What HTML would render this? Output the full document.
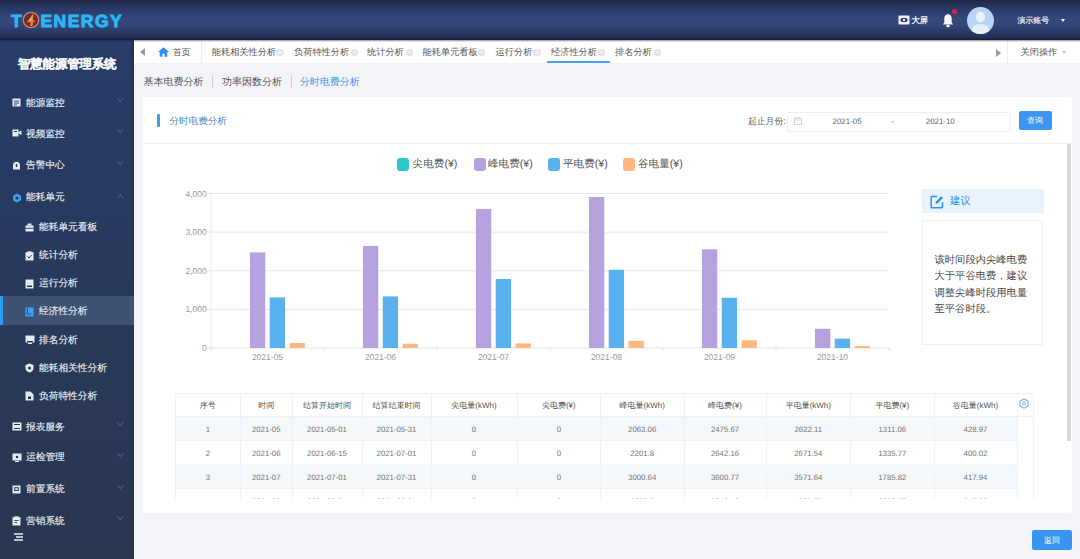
<!DOCTYPE html>
<html><head><meta charset="utf-8">
<style>
*{margin:0;padding:0;box-sizing:border-box}
html,body{width:1080px;height:559px;overflow:hidden}
body{position:relative;background:#f3f4f8;font-family:"Liberation Sans",sans-serif;color:#333;text-rendering:geometricPrecision}
.a{position:absolute}
.t{position:absolute;white-space:nowrap;line-height:1}
#hdr{left:0;top:0;width:1080px;height:40px;background:linear-gradient(180deg,#1d2644 0%,#283866 20%,#36497b 47%,#33467a 62%,#27365e 85%,#222f55 93%,#171d33 100%)}
#side{left:0;top:40px;width:134px;height:519px;background:linear-gradient(180deg,#283d68 0%,#273a60 30%,#29374f 100%);border-right:3px solid #29344e}
.mt{font-size:9.7px;color:#e8ecf3;-webkit-text-stroke:0.15px #e8ecf3}
.ch{position:absolute;width:4.5px;height:4.5px;border-right:1.2px solid #4e5e7c;border-bottom:1.2px solid #4e5e7c;transform:rotate(45deg)}
.tb{font-size:9.2px;color:#555}
.cx{position:absolute;width:7.5px;height:7.5px;border-radius:50%;border:1.3px solid #d8d8d8;background:#eeeeee}
.th{font-size:8px;color:#505050}
.td{font-size:7.8px;color:#767676}
</style></head><body>
<!-- HEADER -->
<div id="hdr" class="a"></div>
<div class="t" style="left:11px;top:13px;font-size:17.5px;font-weight:bold;color:#2cb8f4;-webkit-text-stroke:0.9px #2cb8f4">T</div>
<svg class="a" style="left:22px;top:11px" width="18" height="18" viewBox="0 0 18 18"><circle cx="9" cy="9" r="7.7" fill="#6a3030" stroke="#c98478" stroke-width="1.3"/><path d="M10.8 3 L4.8 11.2 L8.6 11.2 L8.2 15 L10.6 15 L10.9 11.2 L12.6 11.2 L12.6 9.3 L11 9.3 L11.4 3 Z" fill="#e8843a"/><path d="M10.4 5 L6.8 9.6 L9.3 9.6 Z" fill="#f7b060"/></svg>
<div class="t" style="left:40.5px;top:13px;font-size:17.5px;font-weight:bold;color:#2cb8f4;letter-spacing:1.45px;-webkit-text-stroke:0.9px #2cb8f4">ENERGY</div>
<svg class="a" style="left:898px;top:15px" width="12" height="10" viewBox="0 0 12 10"><rect x="0.5" y="0.5" width="11" height="9" rx="1" fill="#eef2f8"/><ellipse cx="6" cy="5" rx="3.6" ry="2.2" fill="#2b3b6a"/><circle cx="6" cy="5" r="1.2" fill="#eef2f8"/></svg>
<div class="t" style="left:911.5px;top:15.5px;font-size:8.3px;color:#f2f4f8;font-weight:bold">大屏</div>
<svg class="a" style="left:942px;top:13px" width="12" height="15" viewBox="0 0 12 15"><path d="M6 1.2 C3.2 1.2 2.3 3.8 2.3 6 L2.3 9.5 L0.8 11.5 L11.2 11.5 L9.7 9.5 L9.7 6 C9.7 3.8 8.8 1.2 6 1.2 Z" fill="#f4f6fa"/><ellipse cx="6" cy="13" rx="1.8" ry="1.3" fill="#f4f6fa"/></svg>
<div class="a" style="left:952px;top:9px;width:5px;height:5px;border-radius:50%;background:#e0243a"></div>
<div class="a" style="left:967px;top:6.5px;width:27px;height:27.5px;border-radius:50%;background:#b7d5f4;overflow:hidden"><svg width="27" height="27.5" viewBox="0 0 27 27.5"><ellipse cx="13.5" cy="10" rx="4.6" ry="5.4" fill="#eaf3fd"/><path d="M3.5 27.5 C4 20 8 17 13.5 17 C19 17 23 20 23.5 27.5 Z" fill="#e6f0fb"/></svg></div>
<div class="t" style="left:1017.5px;top:16.8px;font-size:7.9px;color:#f2f4f8;-webkit-text-stroke:0.15px #f2f4f8">演示账号</div>
<div class="a" style="left:1061px;top:19px;width:0;height:0;border-left:2.6px solid transparent;border-right:2.6px solid transparent;border-top:3.2px solid #f2f4f8"></div>

<!-- SIDEBAR -->
<div id="side" class="a"></div>
<div class="t" style="left:18px;top:57.5px;font-size:12.3px;font-weight:bold;color:#f4f6fa;-webkit-text-stroke:0.3px #f4f6fa">智慧能源管理系统</div>
<svg class="a" style="left:12px;top:98.2px" width="9" height="9" viewBox="0 0 9 9"><rect x="0.5" y="0.5" width="8" height="8" fill="#e6eaf2"/><path d="M2 3h5M2 5h5M2 7h3" stroke="#233860" stroke-width="0.9"/></svg>
<div class="t mt" style="left:26px;top:98.7px">能源监控</div>
<div class="ch" style="left:117.5px;top:96.2px"></div>
<svg class="a" style="left:12px;top:129.0px" width="10" height="9" viewBox="0 0 10 9"><rect x="0.5" y="0.5" width="6" height="7" fill="#e6eaf2"/><path d="M6.5 3 L9.5 1.5 L9.5 6 L6.5 4.5Z" fill="#e6eaf2"/><rect x="2" y="2" width="3" height="1" fill="#233860"/></svg>
<div class="t mt" style="left:26px;top:129.5px">视频监控</div>
<div class="ch" style="left:117.5px;top:127.0px"></div>
<svg class="a" style="left:12px;top:160.5px" width="9" height="9" viewBox="0 0 9 9"><path d="M1 8.5 L1 4.5 C1 2 2.5 0.8 4.5 0.8 C6.5 0.8 8 2 8 4.5 L8 8.5Z" fill="#e6eaf2"/><rect x="3.8" y="3" width="1.4" height="3" fill="#233860"/></svg>
<div class="t mt" style="left:26px;top:161.0px">告警中心</div>
<div class="ch" style="left:117.5px;top:158.5px"></div>
<svg class="a" style="left:12px;top:192.9px" width="10" height="10" viewBox="0 0 10 10"><path d="M5 0.5 L9 2.8 L9 7.2 L5 9.5 L1 7.2 L1 2.8Z" fill="#3ea0f0"/><circle cx="5" cy="5" r="1.6" fill="#233860"/></svg>
<div class="t mt" style="left:26px;top:193.4px">能耗单元</div>
<div class="ch" style="left:117.5px;top:195.5px;transform:rotate(-135deg)"></div>
<div class="a" style="left:0;top:296px;width:134px;height:29px;background:#3e5274"></div>
<div class="a" style="left:0;top:296px;width:3px;height:29px;background:#2d9cf0"></div>
<svg class="a" style="left:25px;top:222.5px" width="9" height="9" viewBox="0 0 9 9"><rect x="2.5" y="0.5" width="4" height="2" fill="#e6eaf2"/><rect x="0.5" y="2.5" width="8" height="6" fill="#e6eaf2"/><rect x="0.5" y="4.8" width="8" height="0.9" fill="#233860"/></svg>
<div class="t mt" style="left:39px;top:223.0px">能耗单元看板</div>
<svg class="a" style="left:25px;top:250.5px" width="9" height="10" viewBox="0 0 9 10"><rect x="0.5" y="1.2" width="8" height="8.3" fill="#e6eaf2"/><rect x="2.5" y="0.3" width="4" height="1.8" fill="#e6eaf2"/><path d="M2.5 5.5 L4 7 L6.5 4" stroke="#233860" stroke-width="1" fill="none"/></svg>
<div class="t mt" style="left:39px;top:251.0px">统计分析</div>
<svg class="a" style="left:25px;top:278.5px" width="9" height="10" viewBox="0 0 9 10"><rect x="0.5" y="0.5" width="8" height="9" fill="#e6eaf2"/><rect x="2" y="6.5" width="5" height="1.5" fill="#233860"/></svg>
<div class="t mt" style="left:39px;top:279.0px">运行分析</div>
<svg class="a" style="left:25px;top:306.5px" width="9" height="10" viewBox="0 0 9 10"><rect x="0.5" y="0.5" width="8" height="9" fill="#3ea0f0"/><path d="M2.5 1.5 L2.5 7 L6.5 7" stroke="#3a5076" stroke-width="1.1" fill="none"/></svg>
<div class="t mt" style="left:39px;top:307.0px">经济性分析</div>
<svg class="a" style="left:25px;top:335.3px" width="10" height="9" viewBox="0 0 10 9"><rect x="0.5" y="0.5" width="9" height="7" fill="#e6eaf2"/><rect x="2" y="6" width="6" height="1" fill="#233860"/><rect x="3" y="8" width="4" height="1" fill="#e6eaf2"/></svg>
<div class="t mt" style="left:39px;top:335.8px">排名分析</div>
<svg class="a" style="left:25px;top:363.2px" width="9" height="10" viewBox="0 0 9 10"><path d="M4.5 0.5 L8.5 2 L8.5 5 C8.5 7.5 6.5 9 4.5 9.6 C2.5 9 0.5 7.5 0.5 5 L0.5 2Z" fill="#e6eaf2"/><circle cx="4.5" cy="5" r="1.5" fill="#233860"/></svg>
<div class="t mt" style="left:39px;top:363.7px">能耗相关性分析</div>
<svg class="a" style="left:25px;top:391.1px" width="9" height="10" viewBox="0 0 9 10"><path d="M0.5 0.5 L5.5 0.5 L8.5 3.5 L8.5 9.5 L0.5 9.5Z" fill="#e6eaf2"/><rect x="3" y="5.5" width="3" height="2.5" fill="#233860"/></svg>
<div class="t mt" style="left:39px;top:391.6px">负荷特性分析</div>
<svg class="a" style="left:12px;top:422.0px" width="10" height="9" viewBox="0 0 10 9"><rect x="0.5" y="0.5" width="9" height="8" fill="#e6eaf2"/><rect x="2" y="2" width="6" height="1" fill="#233860"/><rect x="2" y="6" width="6" height="1" fill="#233860"/></svg>
<div class="t mt" style="left:26px;top:422.5px">报表服务</div>
<div class="ch" style="left:117.5px;top:420.0px"></div>
<svg class="a" style="left:12px;top:452.9px" width="10" height="9" viewBox="0 0 10 9"><rect x="0.5" y="0.5" width="9" height="7" fill="#e6eaf2"/><circle cx="5" cy="4" r="1.3" fill="#233860"/><rect x="3" y="8" width="4" height="1" fill="#e6eaf2"/></svg>
<div class="t mt" style="left:26px;top:453.4px">运检管理</div>
<div class="ch" style="left:117.5px;top:450.9px"></div>
<svg class="a" style="left:12px;top:484.9px" width="9" height="9" viewBox="0 0 9 9"><rect x="0.5" y="0.5" width="8" height="8" fill="#e6eaf2"/><rect x="2.2" y="2.2" width="4.6" height="3.8" fill="#233860"/><rect x="3.2" y="3.2" width="2.6" height="1.8" fill="#e6eaf2"/></svg>
<div class="t mt" style="left:26px;top:485.4px">前置系统</div>
<div class="ch" style="left:117.5px;top:482.9px"></div>
<svg class="a" style="left:12px;top:516.4px" width="9" height="10" viewBox="0 0 9 10"><rect x="0.5" y="1.2" width="8" height="8.3" fill="#e6eaf2"/><rect x="2.5" y="0.3" width="4" height="1.8" fill="#e6eaf2"/><path d="M2.5 4.5h4M2.5 6.5h2.5" stroke="#233860" stroke-width="0.9"/></svg>
<div class="t mt" style="left:26px;top:516.9px">营销系统</div>
<div class="ch" style="left:117.5px;top:514.4px"></div>
<svg class="a" style="left:14px;top:533px" width="9" height="8" viewBox="0 0 9 8"><path d="M0 1h9M2 4h7M0 7h9" stroke="#e6eaf2" stroke-width="1.3"/></svg>
<!-- TABBAR -->
<div class="a" style="left:134px;top:40px;width:946px;height:23px;background:#fff"></div>
<div class="a" style="left:140px;top:48px;width:0;height:0;border-top:4px solid transparent;border-bottom:4px solid transparent;border-right:5.5px solid #9a9a9a"></div>
<svg class="a" style="left:157.5px;top:46.5px" width="11" height="10" viewBox="0 0 11 10"><path d="M5.5 0.3 L11 5 L9.3 5 L9.3 9.7 L6.6 9.7 L6.6 6.8 L4.4 6.8 L4.4 9.7 L1.7 9.7 L1.7 5 L0 5Z" fill="#2e8ff0"/></svg>
<div class="t tb" style="left:173px;top:48px;font-size:8.7px">首页</div>
<div class="a" style="left:201px;top:40px;width:1px;height:23px;background:#eceef2"></div>
<div class="t tb" style="left:211.8px;top:47.5px">能耗相关性分析</div>
<div class="cx" style="left:276.4px;top:48.5px"></div>
<div class="t tb" style="left:294px;top:47.5px">负荷特性分析</div>
<div class="cx" style="left:350.8px;top:48.5px"></div>
<div class="t tb" style="left:367px;top:47.5px">统计分析</div>
<div class="cx" style="left:405.8px;top:48.5px"></div>
<div class="t tb" style="left:422.6px;top:47.5px">能耗单元看板</div>
<div class="cx" style="left:477.8px;top:48.5px"></div>
<div class="t tb" style="left:495.6px;top:47.5px">运行分析</div>
<div class="cx" style="left:533.3px;top:48.5px"></div>
<div class="t tb" style="left:551px;top:47.5px">经济性分析</div>
<div class="cx" style="left:597.8px;top:48.5px"></div>
<div class="t tb" style="left:615px;top:47.5px">排名分析</div>
<div class="cx" style="left:653.8px;top:48.5px"></div>
<div class="a" style="left:546.5px;top:61px;width:63.5px;height:2px;background:#4ca2e6"></div>
<div class="a" style="left:995.5px;top:48.5px;width:0;height:0;border-top:4px solid transparent;border-bottom:4px solid transparent;border-left:5.5px solid #9a9a9a"></div>
<div class="a" style="left:1007px;top:40px;width:1px;height:23px;background:#eceef2"></div>
<div class="t tb" style="left:1020.5px;top:47.5px">关闭操作</div>
<div class="a" style="left:1062px;top:50.5px;width:0;height:0;border-left:2.5px solid transparent;border-right:2.5px solid transparent;border-top:3.5px solid #c4c4c4"></div>
<div class="t" style="left:143.5px;top:78px;font-size:10px;color:#555">基本电费分析</div>
<div class="a" style="left:211.5px;top:75px;width:1px;height:13px;background:#cdd2da"></div>
<div class="t" style="left:222px;top:78px;font-size:10px;color:#555">功率因数分析</div>
<div class="a" style="left:290.5px;top:75px;width:1px;height:13px;background:#cdd2da"></div>
<div class="t" style="left:299.7px;top:78px;font-size:10px;color:#3a93e6">分时电费分析</div>
<div class="a" style="left:0;top:40px;width:1080px;height:1.6px;background:linear-gradient(180deg,rgba(25,30,52,0.5),rgba(25,30,52,0))"></div>
<!-- CARD -->
<div class="a" style="left:143px;top:97px;width:929px;height:416px;background:#fff;border-radius:3px"></div>
<div class="a" style="left:157.3px;top:114px;width:3px;height:13.2px;background:#4a9ae2;border-radius:1px"></div>
<div class="t" style="left:169.4px;top:117px;font-size:9.6px;color:#4a86c6">分时电费分析</div>
<div class="t" style="left:748px;top:117px;font-size:8.8px;color:#606266">起止月份:</div>
<div class="a" style="left:787px;top:111.5px;width:224px;height:20px;border:1px solid #eceef2;border-radius:2px;background:#fff"></div>
<svg class="a" style="left:794px;top:117px" width="8" height="8" viewBox="0 0 8 8"><rect x="0.5" y="1" width="7" height="6.5" fill="none" stroke="#c8ccd4" stroke-width="0.8"/><path d="M0.5 3h7M2.3 0v2M5.7 0v2" stroke="#c8ccd4" stroke-width="0.8"/></svg>
<div class="t" style="left:832.6px;top:118px;font-size:7.9px;color:#606266">2021-05</div>
<div class="t" style="left:891.5px;top:118px;font-size:7.9px;color:#606266">-</div>
<div class="t" style="left:925.8px;top:118px;font-size:7.9px;color:#606266">2021-10</div>
<div class="a" style="left:1018.5px;top:111.3px;width:33px;height:18.5px;background:#3d96f2;border-radius:2px"></div>
<div class="t" style="left:1027px;top:116.5px;font-size:8px;color:#fff">查询</div>
<div class="a" style="left:143px;top:142.5px;width:929px;height:1px;background:#eef0f4"></div>
<div class="a" style="left:1066.8px;top:143.5px;width:4.5px;height:297.5px;background:#d9d9d9"></div>
<div class="a" style="left:397px;top:158.3px;width:12px;height:12.3px;border-radius:3px;background:#2ec7c9"></div>
<div class="t" style="left:412.6px;top:159.3px;font-size:10.6px;color:#555">尖电费(¥)</div>
<div class="a" style="left:473.5px;top:158.3px;width:12px;height:12.3px;border-radius:3px;background:#b6a2de"></div>
<div class="t" style="left:488px;top:159.3px;font-size:10.6px;color:#555">峰电费(¥)</div>
<div class="a" style="left:548.3px;top:158.3px;width:12px;height:12.3px;border-radius:3px;background:#5ab1ef"></div>
<div class="t" style="left:563px;top:159.3px;font-size:10.6px;color:#555">平电费(¥)</div>
<div class="a" style="left:623.3px;top:158.3px;width:12px;height:12.3px;border-radius:3px;background:#ffb980"></div>
<div class="t" style="left:638px;top:159.3px;font-size:10.6px;color:#555">谷电量(¥)</div>
<svg class="a" style="left:0;top:0" width="1080" height="559" viewBox="0 0 1080 559">
<line x1="207" y1="193.5" x2="889" y2="193.5" stroke="#e6e9ef" stroke-width="1"/>
<line x1="207" y1="232.1" x2="889" y2="232.1" stroke="#e6e9ef" stroke-width="1"/>
<line x1="207" y1="270.8" x2="889" y2="270.8" stroke="#e6e9ef" stroke-width="1"/>
<line x1="207" y1="309.4" x2="889" y2="309.4" stroke="#e6e9ef" stroke-width="1"/>
<line x1="211" y1="193.5" x2="211" y2="348" stroke="#eceef3" stroke-width="1"/>
<line x1="207" y1="348" x2="889" y2="348" stroke="#e0e3ea" stroke-width="1"/>
<line x1="211.0" y1="348" x2="211.0" y2="351" stroke="#e0e3ea" stroke-width="1"/>
<line x1="324.0" y1="348" x2="324.0" y2="351" stroke="#e0e3ea" stroke-width="1"/>
<line x1="437.0" y1="348" x2="437.0" y2="351" stroke="#e0e3ea" stroke-width="1"/>
<line x1="550.0" y1="348" x2="550.0" y2="351" stroke="#e0e3ea" stroke-width="1"/>
<line x1="663.0" y1="348" x2="663.0" y2="351" stroke="#e0e3ea" stroke-width="1"/>
<line x1="776.0" y1="348" x2="776.0" y2="351" stroke="#e0e3ea" stroke-width="1"/>
<line x1="889.0" y1="348" x2="889.0" y2="351" stroke="#e0e3ea" stroke-width="1"/>
<rect x="249.95" y="252.38" width="15.3" height="95.62" fill="#b6a2de"/>
<rect x="269.75" y="297.36" width="15.3" height="50.64" fill="#5ab1ef"/>
<rect x="289.55" y="343.06" width="15.3" height="4.94" fill="#ffb980"/>
<rect x="362.95" y="245.95" width="15.3" height="102.05" fill="#b6a2de"/>
<rect x="382.75" y="296.41" width="15.3" height="51.59" fill="#5ab1ef"/>
<rect x="402.55" y="343.75" width="15.3" height="4.25" fill="#ffb980"/>
<rect x="475.95" y="208.92" width="15.3" height="139.08" fill="#b6a2de"/>
<rect x="495.75" y="279.02" width="15.3" height="68.98" fill="#5ab1ef"/>
<rect x="515.55" y="343.44" width="15.3" height="4.56" fill="#ffb980"/>
<rect x="588.95" y="196.98" width="15.3" height="151.02" fill="#b6a2de"/>
<rect x="608.75" y="269.71" width="15.3" height="78.29" fill="#5ab1ef"/>
<rect x="628.55" y="340.85" width="15.3" height="7.15" fill="#ffb980"/>
<rect x="701.95" y="249.39" width="15.3" height="98.61" fill="#b6a2de"/>
<rect x="721.75" y="297.71" width="15.3" height="50.29" fill="#5ab1ef"/>
<rect x="741.55" y="340.27" width="15.3" height="7.72" fill="#ffb980"/>
<rect x="814.95" y="328.80" width="15.3" height="19.20" fill="#b6a2de"/>
<rect x="834.75" y="338.61" width="15.3" height="9.39" fill="#5ab1ef"/>
<rect x="854.55" y="345.99" width="15.3" height="2.01" fill="#ffb980"/>
</svg>
<div class="t" style="right:873.3px;top:189.5px;font-size:8.5px;color:#999">4,000</div>
<div class="t" style="right:873.3px;top:228.1px;font-size:8.5px;color:#999">3,000</div>
<div class="t" style="right:873.3px;top:266.8px;font-size:8.5px;color:#999">2,000</div>
<div class="t" style="right:873.3px;top:305.4px;font-size:8.5px;color:#999">1,000</div>
<div class="t" style="right:873.3px;top:344.0px;font-size:8.5px;color:#999">0</div>
<div class="t" style="left:247.5px;width:40px;text-align:center;top:352.5px;font-size:8.5px;color:#999">2021-05</div>
<div class="t" style="left:360.5px;width:40px;text-align:center;top:352.5px;font-size:8.5px;color:#999">2021-06</div>
<div class="t" style="left:473.5px;width:40px;text-align:center;top:352.5px;font-size:8.5px;color:#999">2021-07</div>
<div class="t" style="left:586.5px;width:40px;text-align:center;top:352.5px;font-size:8.5px;color:#999">2021-08</div>
<div class="t" style="left:699.5px;width:40px;text-align:center;top:352.5px;font-size:8.5px;color:#999">2021-09</div>
<div class="t" style="left:812.5px;width:40px;text-align:center;top:352.5px;font-size:8.5px;color:#999">2021-10</div>
<div class="a" style="left:922px;top:188.7px;width:122.4px;height:24.8px;background:#e8f3fd"></div>
<svg class="a" style="left:930px;top:195px" width="14" height="14" viewBox="0 0 14 14"><path d="M7 1.5 H2 Q1.2 1.5 1.2 2.3 V12 Q1.2 12.8 2 12.8 H11.7 Q12.5 12.8 12.5 12 V7" fill="none" stroke="#2f8ff0" stroke-width="1.5"/><path d="M5.5 8.8 L5.8 6.8 L11.3 1.3 L13 3 L7.5 8.5Z" fill="#2f8ff0"/></svg>
<div class="t" style="left:950px;top:197px;font-size:10.3px;color:#2f8ff0">建议</div>
<div class="a" style="left:922px;top:220.3px;width:121px;height:125px;border:1px solid #f0f1f4;background:#fff"></div>
<div class="t" style="left:934.5px;top:255.5px;font-size:10.3px;color:#4a4a4a">该时间段内尖峰电费</div>
<div class="t" style="left:934.5px;top:272.1px;font-size:10.3px;color:#4a4a4a">大于平谷电费，建议</div>
<div class="t" style="left:934.5px;top:288.7px;font-size:10.3px;color:#4a4a4a">调整尖峰时段用电量</div>
<div class="t" style="left:934.5px;top:305.3px;font-size:10.3px;color:#4a4a4a">至平谷时段。</div>
<div class="a" style="left:175px;top:392.5px;width:859px;height:106px;overflow:hidden">
<div class="a" style="left:0;top:0;width:859px;height:24px;background:#fff;border-top:1px solid #eef0f4;border-bottom:1px solid #eef0f4"></div>
<div class="a" style="left:0;top:24.0px;width:842px;height:24px;background:#f3f8fc;border-bottom:1px solid #f1f3f6"></div>
<div class="a" style="left:0;top:48.0px;width:842px;height:24px;background:#fff;border-bottom:1px solid #f1f3f6"></div>
<div class="a" style="left:0;top:72.0px;width:842px;height:24px;background:#f3f8fc;border-bottom:1px solid #f1f3f6"></div>
<div class="a" style="left:0;top:96.0px;width:842px;height:24px;background:#fff;border-bottom:1px solid #f1f3f6"></div>
<div class="a" style="left:65.0px;top:0;width:1px;height:120px;background:#f0f2f6"></div>
<div class="a" style="left:116.5px;top:0;width:1px;height:120px;background:#f0f2f6"></div>
<div class="a" style="left:186.5px;top:0;width:1px;height:120px;background:#f0f2f6"></div>
<div class="a" style="left:255.5px;top:0;width:1px;height:120px;background:#f0f2f6"></div>
<div class="a" style="left:341.5px;top:0;width:1px;height:120px;background:#f0f2f6"></div>
<div class="a" style="left:425.0px;top:0;width:1px;height:120px;background:#f0f2f6"></div>
<div class="a" style="left:508.5px;top:0;width:1px;height:120px;background:#f0f2f6"></div>
<div class="a" style="left:590.5px;top:0;width:1px;height:120px;background:#f0f2f6"></div>
<div class="a" style="left:675.1px;top:0;width:1px;height:120px;background:#f0f2f6"></div>
<div class="a" style="left:758.5px;top:0;width:1px;height:120px;background:#f0f2f6"></div>
<div class="a" style="left:841.5px;top:0;width:1px;height:120px;background:#f0f2f6"></div>
<div class="a" style="left:0;top:0;width:1px;height:120px;background:#f0f2f6"></div>
<div class="a" style="left:858px;top:0;width:1px;height:120px;background:#f0f2f6"></div>
<div class="t th" style="left:-12.2px;width:90px;text-align:center;top:9px">序号</div>
<div class="t th" style="left:46.2px;width:90px;text-align:center;top:9px">时间</div>
<div class="t th" style="left:107.0px;width:90px;text-align:center;top:9px">结算开始时间</div>
<div class="t th" style="left:176.5px;width:90px;text-align:center;top:9px">结算结束时间</div>
<div class="t th" style="left:254.0px;width:90px;text-align:center;top:9px">尖电量(kWh)</div>
<div class="t th" style="left:338.8px;width:90px;text-align:center;top:9px">尖电费(¥)</div>
<div class="t th" style="left:422.2px;width:90px;text-align:center;top:9px">峰电量(kWh)</div>
<div class="t th" style="left:505.0px;width:90px;text-align:center;top:9px">峰电费(¥)</div>
<div class="t th" style="left:588.3px;width:90px;text-align:center;top:9px">平电量(kWh)</div>
<div class="t th" style="left:672.3px;width:90px;text-align:center;top:9px">平电费(¥)</div>
<div class="t th" style="left:755.5px;width:90px;text-align:center;top:9px">谷电量(kWh)</div>
<div class="t td" style="left:-12.2px;width:90px;text-align:center;top:33.0px">1</div>
<div class="t td" style="left:46.2px;width:90px;text-align:center;top:33.0px">2021-05</div>
<div class="t td" style="left:107.0px;width:90px;text-align:center;top:33.0px">2021-05-01</div>
<div class="t td" style="left:176.5px;width:90px;text-align:center;top:33.0px">2021-05-31</div>
<div class="t td" style="left:254.0px;width:90px;text-align:center;top:33.0px">0</div>
<div class="t td" style="left:338.8px;width:90px;text-align:center;top:33.0px">0</div>
<div class="t td" style="left:422.2px;width:90px;text-align:center;top:33.0px">2063.06</div>
<div class="t td" style="left:505.0px;width:90px;text-align:center;top:33.0px">2475.67</div>
<div class="t td" style="left:588.3px;width:90px;text-align:center;top:33.0px">2622.11</div>
<div class="t td" style="left:672.3px;width:90px;text-align:center;top:33.0px">1311.06</div>
<div class="t td" style="left:755.5px;width:90px;text-align:center;top:33.0px">428.97</div>
<div class="t td" style="left:-12.2px;width:90px;text-align:center;top:57.0px">2</div>
<div class="t td" style="left:46.2px;width:90px;text-align:center;top:57.0px">2021-06</div>
<div class="t td" style="left:107.0px;width:90px;text-align:center;top:57.0px">2021-06-15</div>
<div class="t td" style="left:176.5px;width:90px;text-align:center;top:57.0px">2021-07-01</div>
<div class="t td" style="left:254.0px;width:90px;text-align:center;top:57.0px">0</div>
<div class="t td" style="left:338.8px;width:90px;text-align:center;top:57.0px">0</div>
<div class="t td" style="left:422.2px;width:90px;text-align:center;top:57.0px">2201.8</div>
<div class="t td" style="left:505.0px;width:90px;text-align:center;top:57.0px">2642.16</div>
<div class="t td" style="left:588.3px;width:90px;text-align:center;top:57.0px">2671.54</div>
<div class="t td" style="left:672.3px;width:90px;text-align:center;top:57.0px">1335.77</div>
<div class="t td" style="left:755.5px;width:90px;text-align:center;top:57.0px">400.02</div>
<div class="t td" style="left:-12.2px;width:90px;text-align:center;top:81.0px">3</div>
<div class="t td" style="left:46.2px;width:90px;text-align:center;top:81.0px">2021-07</div>
<div class="t td" style="left:107.0px;width:90px;text-align:center;top:81.0px">2021-07-01</div>
<div class="t td" style="left:176.5px;width:90px;text-align:center;top:81.0px">2021-07-31</div>
<div class="t td" style="left:254.0px;width:90px;text-align:center;top:81.0px">0</div>
<div class="t td" style="left:338.8px;width:90px;text-align:center;top:81.0px">0</div>
<div class="t td" style="left:422.2px;width:90px;text-align:center;top:81.0px">3000.64</div>
<div class="t td" style="left:505.0px;width:90px;text-align:center;top:81.0px">3600.77</div>
<div class="t td" style="left:588.3px;width:90px;text-align:center;top:81.0px">3571.64</div>
<div class="t td" style="left:672.3px;width:90px;text-align:center;top:81.0px">1785.82</div>
<div class="t td" style="left:755.5px;width:90px;text-align:center;top:81.0px">417.94</div>
<div class="t td" style="left:-12.2px;width:90px;text-align:center;top:105.0px">4</div>
<div class="t td" style="left:46.2px;width:90px;text-align:center;top:105.0px">2021-08</div>
<div class="t td" style="left:107.0px;width:90px;text-align:center;top:105.0px">2021-08-01</div>
<div class="t td" style="left:176.5px;width:90px;text-align:center;top:105.0px">2021-08-31</div>
<div class="t td" style="left:254.0px;width:90px;text-align:center;top:105.0px">0</div>
<div class="t td" style="left:338.8px;width:90px;text-align:center;top:105.0px">0</div>
<div class="t td" style="left:422.2px;width:90px;text-align:center;top:105.0px">3258.3</div>
<div class="t td" style="left:505.0px;width:90px;text-align:center;top:105.0px">3910.12</div>
<div class="t td" style="left:588.3px;width:90px;text-align:center;top:105.0px">4053.78</div>
<div class="t td" style="left:672.3px;width:90px;text-align:center;top:105.0px">2026.97</div>
<div class="t td" style="left:755.5px;width:90px;text-align:center;top:105.0px">345.33</div>
<svg class="a" style="left:843.5px;top:5.5px" width="10" height="11" viewBox="0 0 10 11"><path d="M5 0.8 L9 3 L9 8 L5 10.2 L1 8 L1 3Z" fill="none" stroke="#7ba7e2" stroke-width="1.1"/><circle cx="5" cy="5.5" r="1.6" fill="none" stroke="#7ba7e2" stroke-width="1"/></svg>
</div>
<div class="a" style="left:1032px;top:530px;width:39.5px;height:19.7px;background:#3894f0;border-radius:2px"></div>
<div class="t" style="left:1044px;top:536.8px;font-size:8px;color:#fff">返回</div>
</body></html>
